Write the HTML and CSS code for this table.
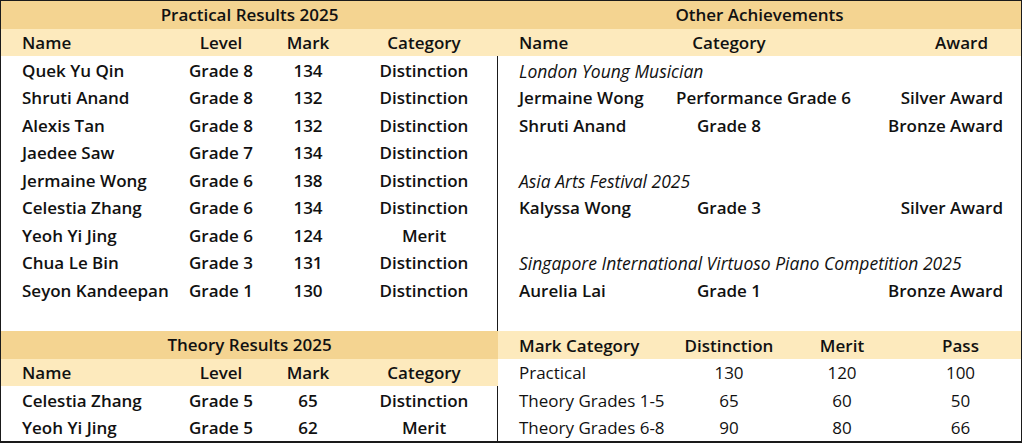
FILE: index.html
```html
<!DOCTYPE html>
<html lang="en">
<head>
<meta charset="utf-8">
<title>Results 2025</title>
<link rel="stylesheet" href="styles.css">
</head>
<body>
<div class="sheet">
  <section class="panel panel-left">
    <table class="grid results">
      <colgroup>
        <col class="c-name"><col class="c-level"><col class="c-mark"><col class="c-cat">
      </colgroup>
      <tr class="title"><td colspan="4">Practical Results 2025</td></tr>
      <tr class="head"><td class="l">Name</td><td>Level</td><td>Mark</td><td>Category</td></tr>
      <tr class="row"><td class="l">Quek Yu Qin</td><td>Grade 8</td><td>134</td><td>Distinction</td></tr>
      <tr class="row"><td class="l">Shruti Anand</td><td>Grade 8</td><td>132</td><td>Distinction</td></tr>
      <tr class="row"><td class="l">Alexis Tan</td><td>Grade 8</td><td>132</td><td>Distinction</td></tr>
      <tr class="row"><td class="l">Jaedee Saw</td><td>Grade 7</td><td>134</td><td>Distinction</td></tr>
      <tr class="row"><td class="l">Jermaine Wong</td><td>Grade 6</td><td>138</td><td>Distinction</td></tr>
      <tr class="row"><td class="l">Celestia Zhang</td><td>Grade 6</td><td>134</td><td>Distinction</td></tr>
      <tr class="row"><td class="l">Yeoh Yi Jing</td><td>Grade 6</td><td>124</td><td>Merit</td></tr>
      <tr class="row"><td class="l">Chua Le Bin</td><td>Grade 3</td><td>131</td><td>Distinction</td></tr>
      <tr class="row"><td class="l">Seyon Kandeepan</td><td>Grade 1</td><td>130</td><td>Distinction</td></tr>
      <tr class="row"><td colspan="4"></td></tr>
      <tr class="title"><td colspan="4">Theory Results 2025</td></tr>
      <tr class="head"><td class="l">Name</td><td>Level</td><td>Mark</td><td>Category</td></tr>
      <tr class="row"><td class="l">Celestia Zhang</td><td>Grade 5</td><td>65</td><td>Distinction</td></tr>
      <tr class="row"><td class="l">Yeoh Yi Jing</td><td>Grade 5</td><td>62</td><td>Merit</td></tr>
    </table>
  </section>
  <section class="panel panel-right">
    <table class="grid achievements">
      <colgroup>
        <col class="c-aname"><col class="c-acat"><col class="c-award">
      </colgroup>
      <tr class="title"><td colspan="3">Other Achievements</td></tr>
      <tr class="head"><td class="l">Name</td><td>Category</td><td class="r">Award</td></tr>
      <tr class="row"><td colspan="3" class="l event">London Young Musician</td></tr>
      <tr class="row"><td class="l">Jermaine Wong</td><td class="wide">Performance Grade 6</td><td class="r award">Silver Award</td></tr>
      <tr class="row"><td class="l">Shruti Anand</td><td>Grade 8</td><td class="r award">Bronze Award</td></tr>
      <tr class="row"><td colspan="3"></td></tr>
      <tr class="row"><td colspan="3" class="l event">Asia Arts Festival 2025</td></tr>
      <tr class="row"><td class="l">Kalyssa Wong</td><td>Grade 3</td><td class="r award">Silver Award</td></tr>
      <tr class="row"><td colspan="3"></td></tr>
      <tr class="row"><td colspan="3" class="l event">Singapore International Virtuoso Piano Competition 2025</td></tr>
      <tr class="row"><td class="l">Aurelia Lai</td><td>Grade 1</td><td class="r award">Bronze Award</td></tr>
      <tr class="row"><td colspan="3"></td></tr>
    </table>
    <table class="grid thresholds">
      <colgroup>
        <col class="c-mcat"><col class="c-dist"><col class="c-merit"><col class="c-pass">
      </colgroup>
      <tr class="head"><td class="l">Mark Category</td><td>Distinction</td><td>Merit</td><td>Pass</td></tr>
      <tr class="row plain"><td class="l">Practical</td><td>130</td><td>120</td><td>100</td></tr>
      <tr class="row plain"><td class="l">Theory Grades 1-5</td><td>65</td><td>60</td><td>50</td></tr>
      <tr class="row plain"><td class="l">Theory Grades 6-8</td><td>90</td><td>80</td><td>66</td></tr>
    </table>
  </section>
</div>
</body>
</html>
```

FILE: styles.css
```css
* { box-sizing: border-box; }

html, body {
  margin: 0;
  padding: 0;
  background: #ffffff;
}

body {
  font-family: "Open Sans", "Noto Sans", "Liberation Sans", sans-serif;
  color: #111111;
  font-size: 17px;
}

.sheet {
  display: flex;
  width: 1022px;
  border: 1px solid #1a1a1a;
  border-bottom-width: 2px;
}

.panel-left {
  width: 497px;
  border-right: 1.5px solid #1a1a1a;
}

.panel-right {
  flex: 1;
}

.grid {
  border-collapse: collapse;
  table-layout: fixed;
  width: 100%;
}

.grid td {
  height: 27.5px;
  padding: 2px 0 0 0;
  text-align: center;
  vertical-align: middle;
  white-space: nowrap;
  font-weight: 600;
  line-height: 20px;
}

.grid td.l {
  text-align: left;
  padding-left: 21px;
}

.grid td.r {
  text-align: right;
  padding-right: 33px;
}

.grid td.award {
  padding-right: 18px;
}

.title td {
  background: #f4d491;
  padding-top: 0;
}

.head td {
  background: #fdeabd;
}

.event {
  font-style: italic;
  font-weight: 400 !important;
  font-size: 17.5px;
}

.plain td {
  font-weight: 400;
}

.c-name { width: 175px; }
.c-level { width: 90px; }
.c-mark { width: 84px; }
.c-cat { width: 148px; }

.c-aname { width: 161px; }
.c-acat { width: 140px; }
.c-award { width: auto; }

.grid td.wide {
  text-align: left;
  padding-left: 17px;
  overflow: visible;
}

.c-mcat { width: 181px; }
.c-dist { width: 100px; }
.c-merit { width: 126px; }
.c-pass { width: auto; }

.thresholds td:last-child {
  padding-right: 5px;
}
```
